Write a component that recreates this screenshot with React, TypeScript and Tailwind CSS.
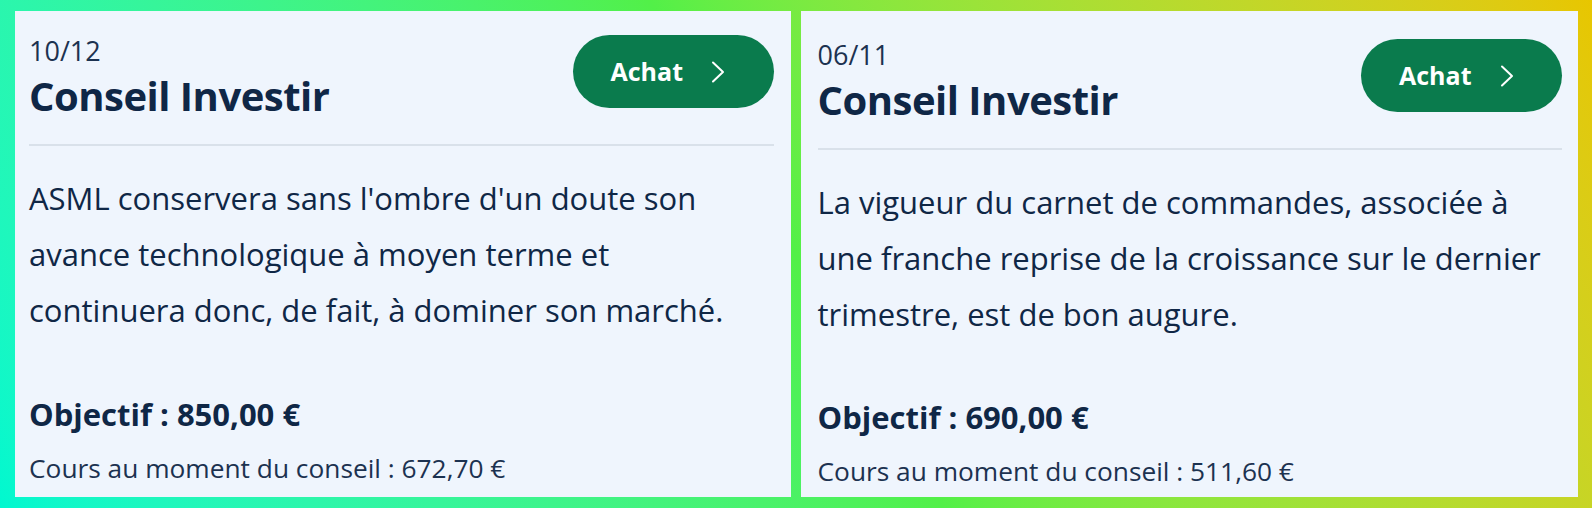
const font = { fontFamily: '"Open Sans", "Noto Sans", sans-serif' }

type Advice = {
  date: string
  text: string
  target: string
  price: string
}

const advices: Advice[] = [
  {
    date: '10/12',
    text: "ASML conservera sans l'ombre d'un doute son avance technologique à moyen terme et continuera donc, de fait, à dominer son marché.",
    target: '850,00 €',
    price: '672,70 €',
  },
  {
    date: '06/11',
    text: 'La vigueur du carnet de commandes, associée à une franche reprise de la croissance sur le dernier trimestre, est de bon augure.',
    target: '690,00 €',
    price: '511,60 €',
  },
]

function BuyButton() {
  return (
    <button className="flex h-[73px] w-[201px] shrink-0 items-center rounded-full bg-[#0a7b4d] pl-[38px] text-white">
      <span className="text-[25px] font-bold leading-none">Achat</span>
      <svg className="ml-[28px]" width="14" height="22" viewBox="0 0 14 22" fill="none">
        <path d="M2 1.5 L12 11 L2 20.5" stroke="white" strokeWidth="2" strokeLinecap="round" strokeLinejoin="round" />
      </svg>
    </button>
  )
}

function AdviceCard({ advice, shifted }: { advice: Advice; shifted?: boolean }) {
  return (
    <div
      className={`flex flex-1 flex-col bg-[#eff5fd] text-[#0f2746] ${
        shifted ? 'pt-[28px] pb-[10px] pl-[17px] pr-[16px]' : 'pt-[24px] pb-[13px] pl-[14px] pr-[17px]'
      }`}
    >
      <div className="flex items-start justify-between">
        <div className="pt-px">
          <div className="text-[27px] leading-[30px] text-[#1c3250]">{advice.date}</div>
          <div className="mt-[10px] text-[40px] font-bold leading-[40px] tracking-[-0.5px]">Conseil Investir</div>
        </div>
        <BuyButton />
      </div>
      <div className="mt-[28px] h-[2px] bg-[#d9e1ea]" />
      <p className="mt-[24px] text-[31px] leading-[56px]">{advice.text}</p>
      <div className="mt-auto text-[31px] font-bold leading-[36px]">Objectif : {advice.target}</div>
      <div className="mt-[20px] text-[26.3px] leading-[32px] text-[#1c3250]">
        Cours au moment du conseil : {advice.price}
      </div>
    </div>
  )
}

export default function App() {
  return (
    <div
      style={font}
      className="flex h-[508px] w-[1592px] gap-[10px] bg-linear-60 from-[#00f8d0] via-[#52f048] to-[#e8c600] py-[11px] pl-[15px] pr-[14px]"
    >
      <AdviceCard advice={advices[0]} />
      <AdviceCard advice={advices[1]} shifted />
    </div>
  )
}
